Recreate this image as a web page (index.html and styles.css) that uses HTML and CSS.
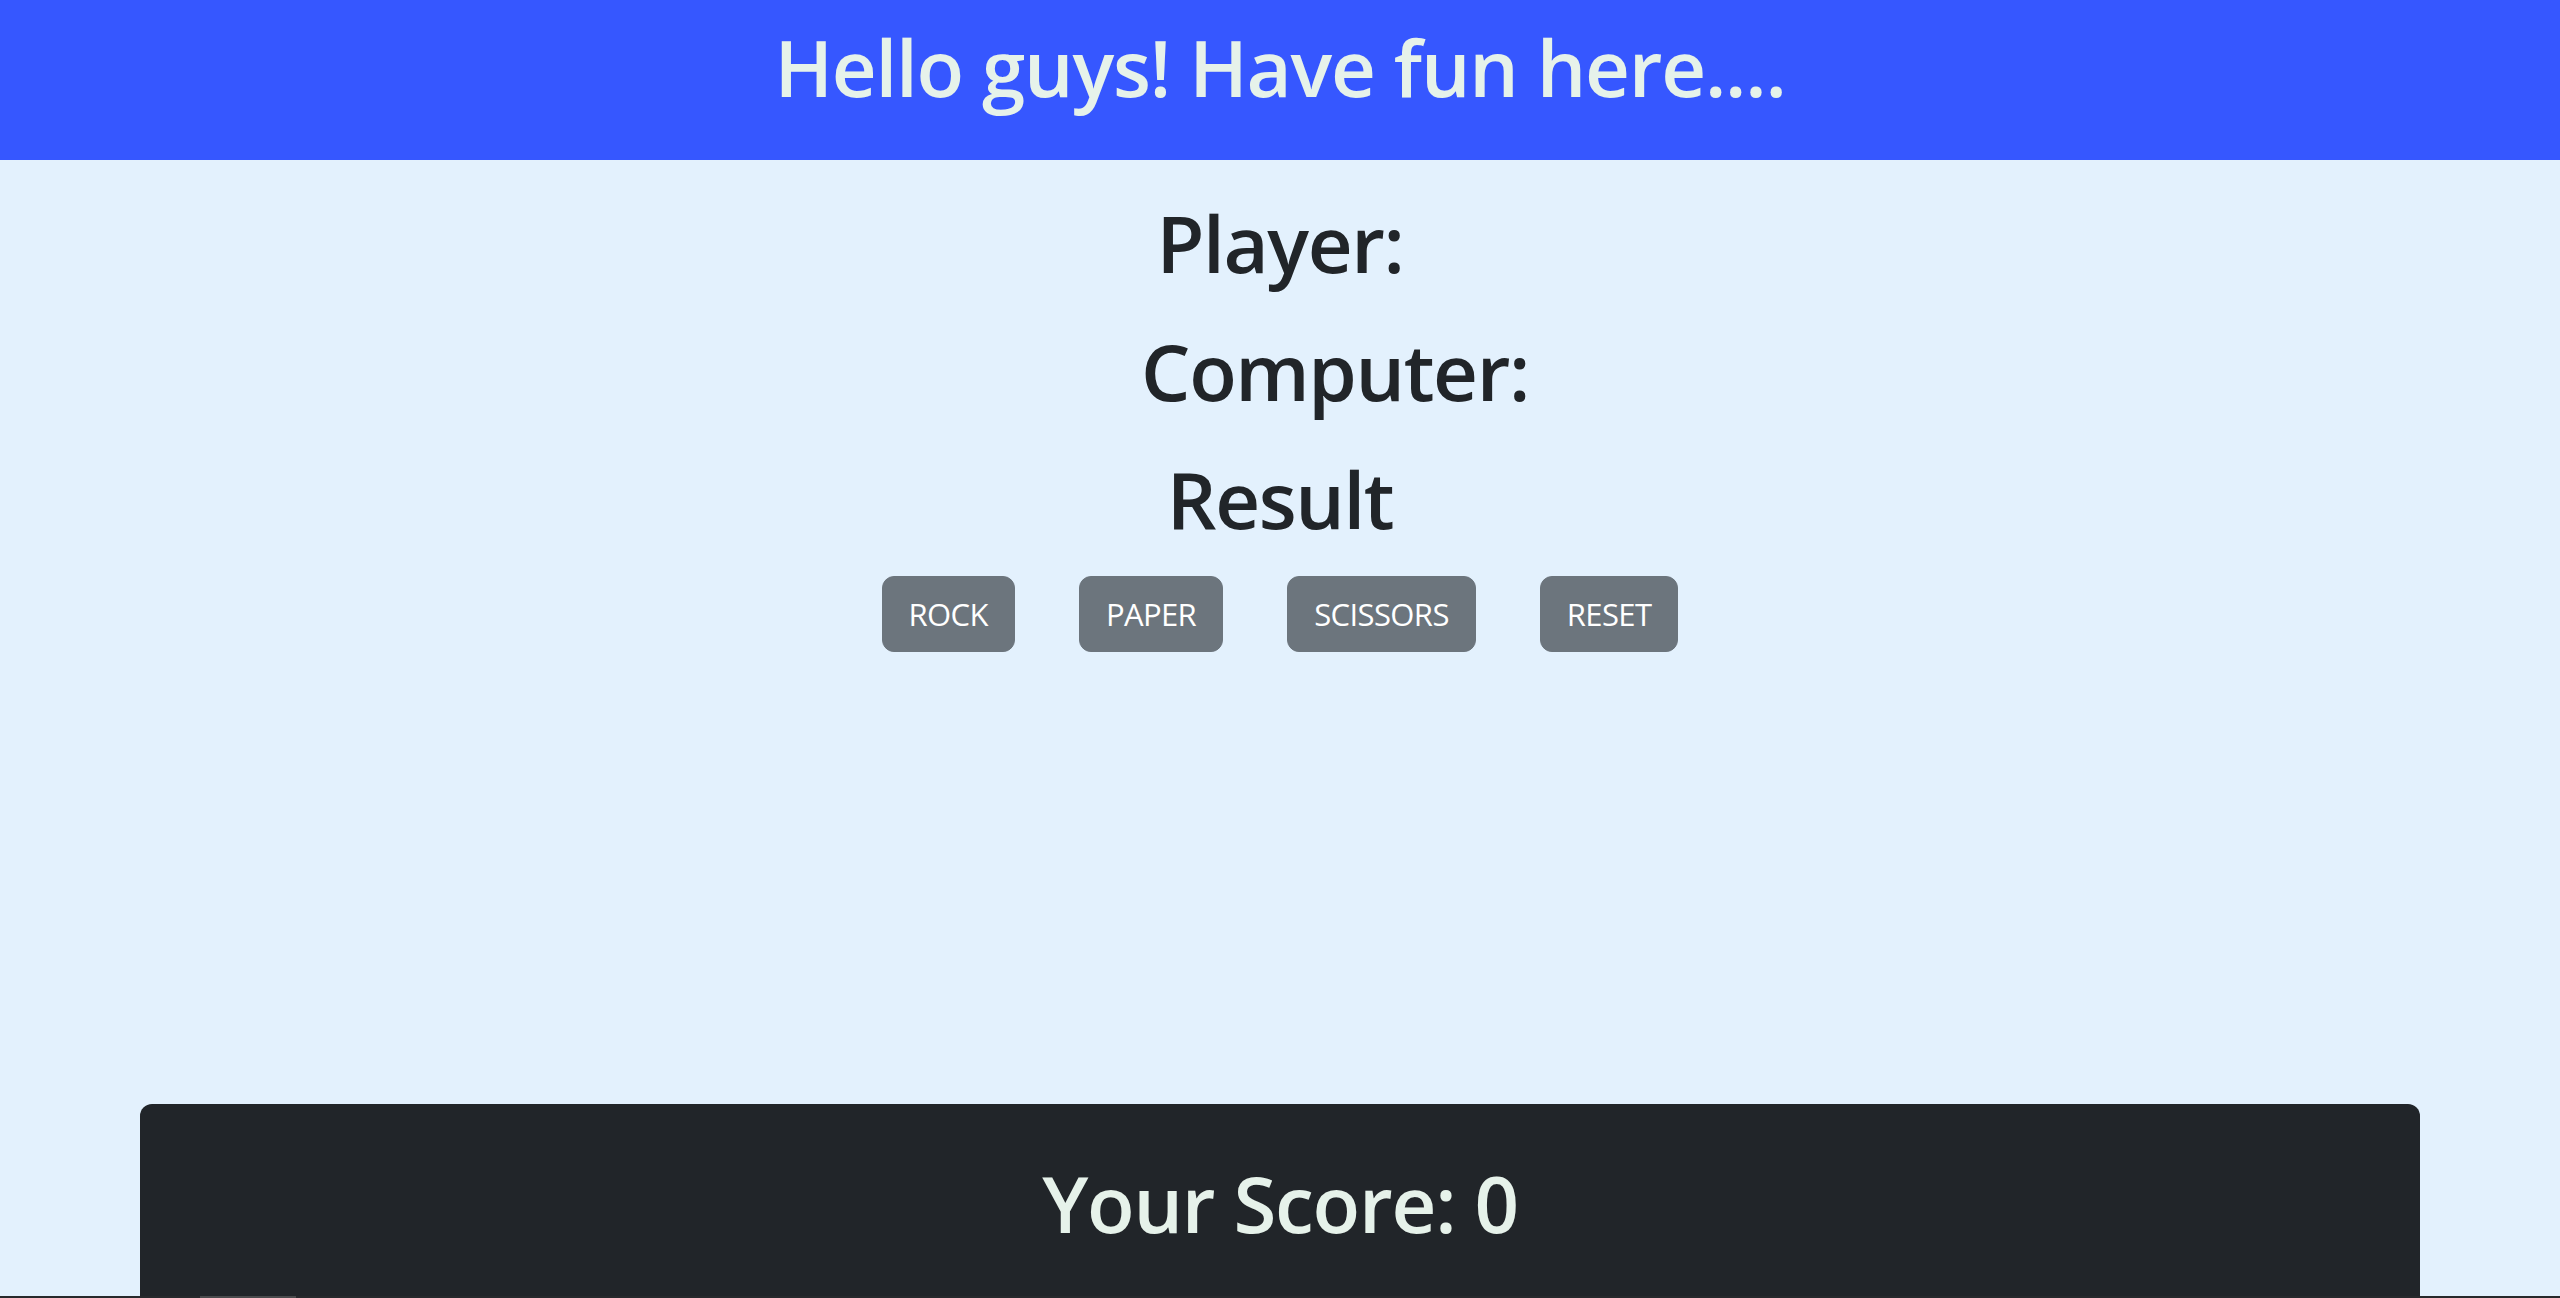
FILE: index.html
```html
<!DOCTYPE html>
<html lang="en">
<head>
<meta charset="utf-8">
<title>Rock Paper Scissors</title>
<link rel="stylesheet" href="styles.css">
</head>
<body>
<header class="topbar">
  <h1 class="topbar-title">Hello guys! Have fun here....</h1>
</header>
<main class="game">
  <h1 class="line">Player:<span class="pick"></span></h1>
  <h1 class="line line-computer">Computer:<span class="pick"></span></h1>
  <h1 class="line line-result">Result</h1>
  <div class="controls">
    <button class="btn">Rock</button>
    <button class="btn">Paper</button>
    <button class="btn">Scissors</button>
    <button class="btn">Reset</button>
  </div>
  <section class="score-card">
    <h1 class="score">Your Score: 0</h1>
  </section>
</main>
<div class="hscroll"><div class="hscroll-thumb"></div></div>
</body>
</html>
```
FILE: styles.css
```css
html, body {
  margin: 0;
  padding: 0;
  height: 100%;
  overflow: hidden;
}
body {
  background: #e3f1fd;
  font-family: "Open Sans", "Noto Sans", sans-serif;
  color: #212529;
}
.topbar {
  background: #3657ff;
  height: 160px;
  box-sizing: border-box;
  padding-top: 19px;
  text-align: center;
}
.topbar-title {
  margin: 0;
  font-size: 78px;
  line-height: 96px;
  font-weight: 600;
  letter-spacing: -1.2px;
  color: #e6f2ea;
}
.game {
  display: flex;
  flex-direction: column;
  align-items: center;
  padding-top: 35px;
}
.line {
  margin: 0 0 32px;
  font-size: 78px;
  line-height: 96px;
  font-weight: 600;
  letter-spacing: -1.4px;
  color: #212529;
}
.line-computer {
  padding-left: 110px;
}
.line-result {
  margin-bottom: 29px;
}
.controls {
  display: flex;
  gap: 64px;
  justify-content: center;
}
.btn {
  font-family: "Open Sans", "Noto Sans", sans-serif;
  font-size: 31px;
  line-height: 48px;
  padding: 13px 26px;
  border: 1px solid #6c757d;
  border-radius: 12px;
  background: #6c757d;
  color: #ffffff;
  text-transform: uppercase;
  letter-spacing: -0.6px;
}
.score-card {
  margin-top: 452px;
  width: 2280px;
  box-sizing: border-box;
  background: #212529;
  border-radius: 12px;
  padding: 51px 0 80px;
  text-align: center;
}
.score {
  margin: 0;
  font-size: 78px;
  line-height: 96px;
  font-weight: 600;
  letter-spacing: -1.2px;
  color: #e6f2ea;
}
.hscroll {
  position: fixed;
  left: 0;
  right: 0;
  bottom: 0;
  height: 2px;
  background: #27292c;
}
.hscroll-thumb {
  position: absolute;
  left: 200px;
  width: 96px;
  top: 0;
  bottom: 0;
  background: #4a4b4d;
}
```
